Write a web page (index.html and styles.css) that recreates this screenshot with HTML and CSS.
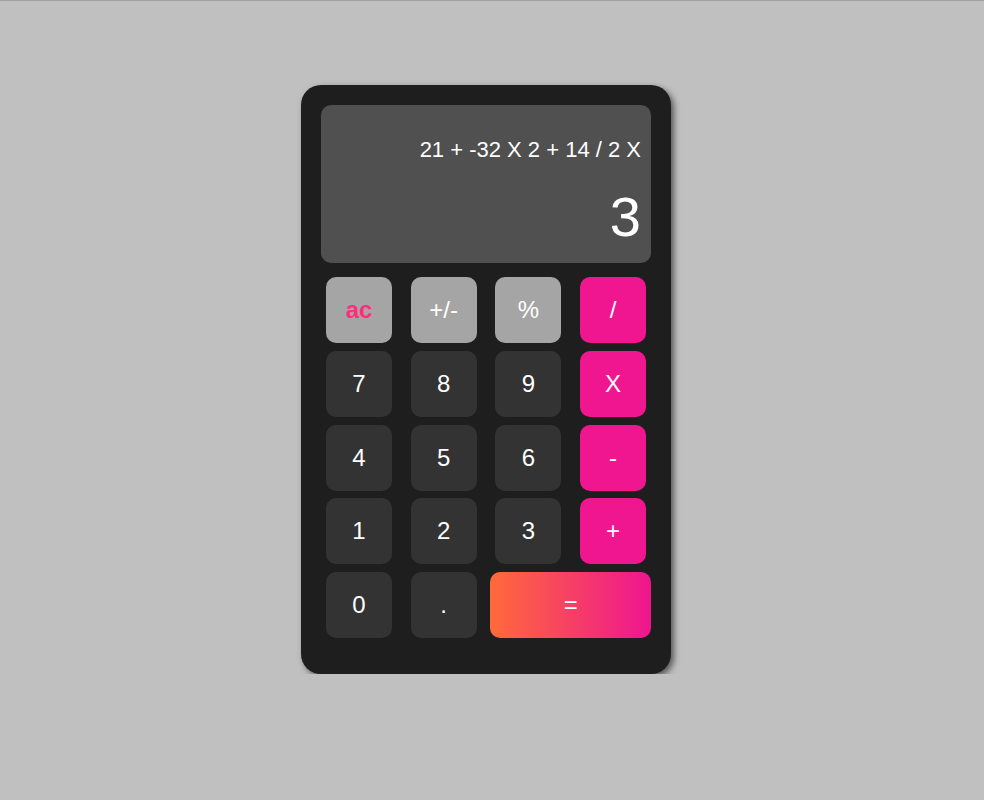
FILE: index.html
```html
<!DOCTYPE html>
<html lang="en">
<head>
<meta charset="utf-8">
<title>Calculator</title>
<link rel="stylesheet" href="styles.css">
</head>
<body>
<div class="calculator">
  <div class="display">
    <div class="expression">21 + -32 X 2 + 14 / 2 X</div>
    <div class="result">3</div>
  </div>
  <div class="keys">
    <button class="key fn ac">ac</button>
    <button class="key fn">+/-</button>
    <button class="key fn">%</button>
    <button class="key op">/</button>
    <button class="key num">7</button>
    <button class="key num">8</button>
    <button class="key num">9</button>
    <button class="key op">X</button>
    <button class="key num">4</button>
    <button class="key num">5</button>
    <button class="key num">6</button>
    <button class="key op">-</button>
    <button class="key num">1</button>
    <button class="key num">2</button>
    <button class="key num">3</button>
    <button class="key op">+</button>
    <button class="key num">0</button>
    <button class="key num">.</button>
    <button class="key equals">=</button>
  </div>
</div>
</body>
</html>
```
FILE: styles.css
```css
html {
  background: #c0c0c0;
  border-top: 1px solid #a0a0a0;
}
body {
  margin: 0;
  padding: 84px 12px 0 0;
  display: flex;
  justify-content: center;
  font-family: "Liberation Sans", Arial, sans-serif;
}
.calculator {
  width: 330px;
  padding: 20px 20px 36px;
  background: #1e1e1e;
  border-radius: 20px;
  box-shadow: 3px 3px 6px rgba(0, 0, 0, 0.55);
}
.display {
  height: 158px;
  box-sizing: border-box;
  background: #505050;
  border-radius: 10px;
  padding: 0 10px 18px;
  display: flex;
  flex-direction: column;
  justify-content: flex-end;
  align-items: flex-end;
  color: #fff;
}
.expression {
  font-size: 22px;
  line-height: 22px;
  margin-bottom: 28px;
}
.result {
  font-size: 56px;
  line-height: 56px;
}
.keys {
  margin: 14px 5px 0;
  display: grid;
  grid-template-columns: repeat(4, 66px);
  grid-auto-rows: 66px;
  column-gap: 18.67px;
  row-gap: 7.75px;
}
.key {
  border: none;
  border-radius: 10px;
  font-family: "Liberation Sans", Arial, sans-serif;
  font-size: 24px;
  color: #fff;
  padding: 0;
  cursor: pointer;
}
.num {
  background: #333333;
}
.fn {
  background: #a5a5a5;
}
.ac {
  color: #ff2d7a;
  font-weight: bold;
}
.op {
  background: #f0168f;
}
.equals {
  grid-column: 3 / 5;
  margin: 0 -5px;
  background: linear-gradient(to right, #ff6a3a, #ee1590);
}
```
